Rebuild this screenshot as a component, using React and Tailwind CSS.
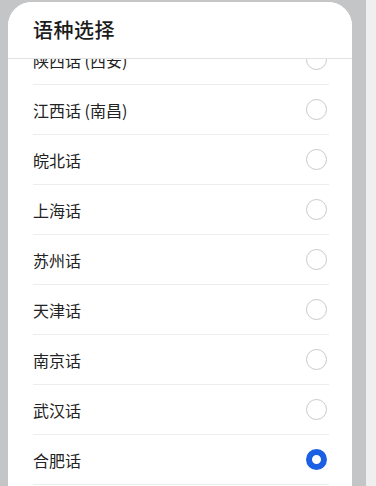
const dialects = [
  { name: '陕西话 (西安)' },
  { name: '江西话 (南昌)' },
  { name: '皖北话' },
  { name: '上海话' },
  { name: '苏州话' },
  { name: '天津话' },
  { name: '南京话' },
  { name: '武汉话' },
  { name: '合肥话', selected: true },
];

function Radio({ checked }) {
  if (checked) {
    return <span className="w-[21px] h-[21px] rounded-full border-[6px] border-[#1b5fe3] bg-white shrink-0" />;
  }
  return <span className="w-[21px] h-[21px] rounded-full border-[1.5px] border-[#c9c9c9] bg-white shrink-0" />;
}

export default function App() {
  return (
    <div
      className="w-[376px] h-[486px] overflow-hidden flex bg-[#efefef]"
      style={{ fontFamily: '"Noto Sans CJK SC", "Noto Sans", sans-serif' }}
    >
      {/* left edge */}
      <div className="w-[8px] bg-[#c3c5c7]" />

      {/* sheet */}
      <div className="w-[344px] pt-[2px] bg-[#c3c5c7]">
        <div className="h-full bg-white rounded-t-[24px] flex flex-col overflow-hidden">
          <div className="h-[57px] shrink-0 border-b border-[#e2e2e2] flex items-center px-[25px] relative z-10 bg-white">
            <h1 className="text-[20px] font-medium text-[#1c1c1c] tracking-[0.5px]">语种选择</h1>
          </div>
          <div className="flex-1 overflow-hidden">
            <ul className="-mt-[24px] px-[25px] pr-[23px]">
              {dialects.map((d) => (
                <li key={d.name} className="h-[50px] flex items-center justify-between border-b border-[#ededed]">
                  <span className="text-[16px] text-[#222]">{d.name}</span>
                  <span className="pr-[2px] flex"><Radio checked={d.selected} /></span>
                </li>
              ))}
            </ul>
          </div>
        </div>
      </div>

      {/* right scrollbar strip */}
      <div className="w-[14px] bg-[#c3c5c7]" />
    </div>
  );
}
